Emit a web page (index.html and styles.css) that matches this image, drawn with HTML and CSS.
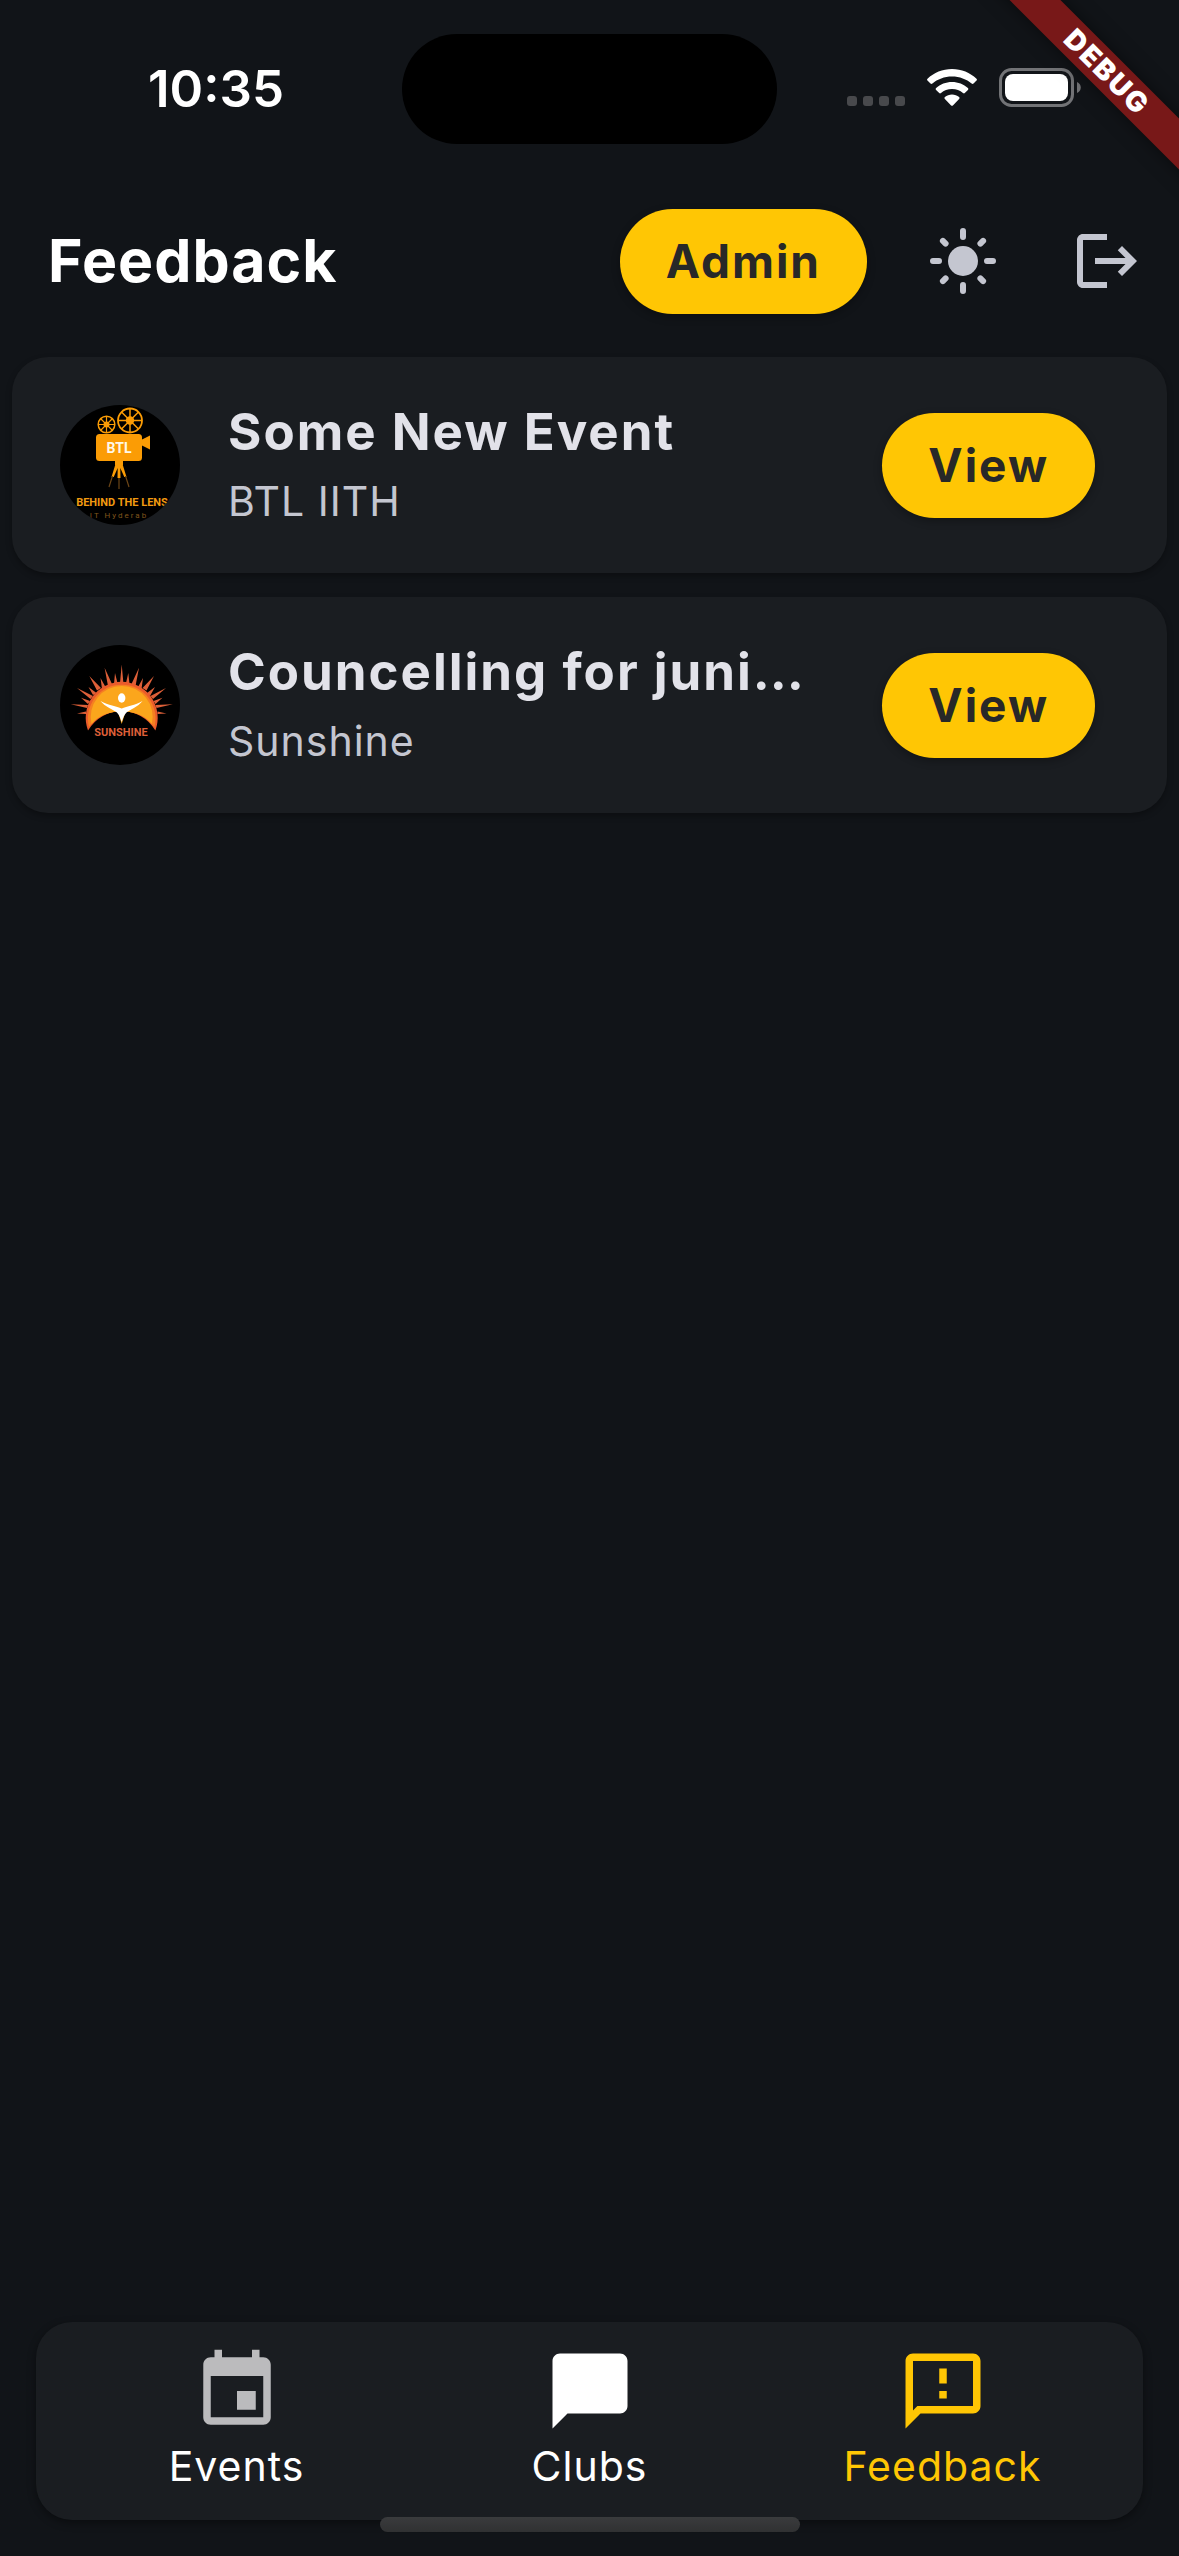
FILE: index.html
```html
<!DOCTYPE html>
<html lang="en">
<head>
<meta charset="utf-8">
<meta name="viewport" content="width=device-width, initial-scale=1">
<title>Feedback</title>
<link rel="stylesheet" href="styles.css">
</head>
<body>
<div class="app">
  <div class="status-bar">
    <time class="clock">10:35</time>
    <div class="island"></div>
    <div class="indicators">
      <svg class="signal" width="58" height="11" viewBox="0 0 58 11" aria-hidden="true">
        <rect width="10" height="10" rx="3"/><rect x="16" width="10" height="10" rx="3"/><rect x="32" width="10" height="10" rx="3"/><rect x="48" width="10" height="10" rx="3"/>
      </svg>
      <svg class="wifi" width="50" height="38" viewBox="0 0 50 38" aria-hidden="true">
        <path d="M25 0C15.500 0 6.900 3.700.5 9.700c-.6.600-.6 1.300 0 1.900l3 3c.6.600 1.300.6 1.900 0C10.500 10.300 17.400 7.600 25 7.600s14.500 2.700 19.600 7c.6.600 1.300.6 1.900 0l3-3c.6-.6.6-1.300 0-1.900C43.100 3.700 34.500 0 25 0z"/>
        <path d="M25 13c-6.100 0-11.700 2.300-15.900 6-.6.600-.6 1.300 0 1.900l3.100 3.100c.5.500 1.200.5 1.800 0 2.900-2.500 6.800-4 11-4s8.100 1.500 11 4c.6.500 1.300.5 1.800 0l3.100-3.100c.6-.6.6-1.300 0-1.900-4.200-3.700-9.800-6-15.900-6z"/>
        <path d="M25 25.500c-2.700 0-5.200 1-7.100 2.600-.6.500-.6 1.300 0 1.900l6.200 6.400c.5.600 1.300.6 1.800 0l6.200-6.400c.6-.6.6-1.400 0-1.900-1.900-1.600-4.400-2.600-7.100-2.600z"/>
      </svg>
      <svg class="battery" width="82" height="39" viewBox="0 0 82 39" aria-hidden="true">
        <rect x="1.500" y="1.500" width="72" height="36" rx="11" fill="none" stroke="#727376" stroke-width="3"/>
        <rect x="6" y="6" width="63" height="27" rx="8" fill="#fff"/>
        <path d="M78 14c5 2 5 9 0 11z" fill="#727376"/>
      </svg>
    </div>
  </div>

  <header class="app-bar">
    <h1 class="app-title">Feedback</h1>
    <button class="pill" type="button">Admin</button>
    <div class="tools">
      <button class="icon-button" type="button" aria-label="Light mode">
        <svg width="72" height="72" viewBox="0 0 24 24" aria-hidden="true">
          <circle cx="12" cy="12" r="5" fill="currentColor"/>
          <path d="M12 2v2M12 20v2M2 12h2M20 12h2M5.300 5.300l.9.900M17.800 17.800l.9.900M5.300 18.700l.9-.9M17.800 6.200l.9-.9" fill="none" stroke="currentColor" stroke-width="2" stroke-linecap="round"/>
        </svg>
      </button>
      <button class="icon-button" type="button" aria-label="Log out">
        <svg width="72" height="72" viewBox="0 0 24 24" fill="currentColor" aria-hidden="true">
          <path d="M17 7l-1.410 1.410L18.170 11H8v2h10.170l-2.580 2.580L17 17l5-5zM4 5h8V3H4c-1.100 0-2 .9-2 2v14c0 1.100.9 2 2 2h8v-2H4V5z"/>
        </svg>
      </button>
    </div>
  </header>

  <main class="event-list">
    <article class="card">
      <svg class="avatar" viewBox="0 0 120 120" role="img" aria-label="Behind The Lens club logo">
        <rect width="120" height="120" fill="#000"/>
        <g fill="none" stroke="#fb9c05">
          <circle cx="46.500" cy="19.500" r="8.300" stroke-width="1.500"/>
          <path d="M46.500 11v17M38 19.500h17M40.500 13.500l12 12M52.500 13.500l-12 12" stroke-width="1.200"/>
          <circle cx="70" cy="15.500" r="12" stroke-width="1.800"/>
          <path d="M70 3.500v24M58 15.500h24M61.500 7l17 17M78.500 7l-17 17" stroke-width="1.500"/>
        </g>
        <g fill="#fb9c05">
          <circle cx="46.500" cy="19.500" r="3"/>
          <circle cx="70" cy="15.500" r="4.200"/>
          <rect x="36" y="29" width="46" height="27" rx="3.500"/>
          <path d="M81 35l9-4.500v14L81 40zM55 56h8v4h-8z"/>
          <path d="M55.500 59h7l4 13h-2.200l-4-9 .2 10h-3l.2-10-4 9h-2.200z"/>
        </g>
        <path d="M52.500 71l-3.500 11M59 73v11M65.500 71l3.500 11" fill="none" stroke="#6b4516" stroke-width="1.200"/>
        <text class="logo-text logo-mark" x="59" y="48" text-anchor="middle">BTL</text>
        <text class="logo-text logo-name" x="62" y="101" text-anchor="middle">BEHIND THE LENS</text>
        <text class="logo-place" x="59" y="113" text-anchor="middle">IT Hyderab</text>
      </svg>
      <div class="card-text">
        <h2 class="card-title">Some New Event</h2>
        <p class="card-club">BTL IITH</p>
      </div>
      <button class="pill" type="button">View</button>
    </article>

    <article class="card">
      <svg class="avatar" viewBox="0 0 120 120" role="img" aria-label="Sunshine club logo">
        <rect width="120" height="120" fill="#000"/>
        <g fill="#dd5f38">
          <path d="M60 38l1.700-18.500L63.400 38zM48 41l-3.400-18.300L52 39zM75.500 41l3.500-18.300L71.500 39zM37 45.500L29.300 31 41 43zM86.500 45.500L94 31 82.500 43zM30.500 54L17 43l16 8zM93 54l13-11-15.500 8zM27 63l-16.300-3.700L28 60zM96.500 63l16.300-3.700L95.500 60z"/>
          <path d="M54 39l1-11 2.500 10zM66 38l2.300-10L69.500 39zM42 44l-1.500-11 5 9zM78 42l5-9-1.500 11zM33 50l-4.500-8 8 6zM87 48l8-6-5 9zM28 59l-7-6.300 9 3.300zM93.500 56l9-3.300-7 6.300zM26 69l-9-.5 9-2zM97.500 69l9-.5-9-2z"/>
        </g>
        <path d="M28 85.500a36 36 0 1 1 67.400 0Q84 67 61.700 66 39.400 67 28 85.500z" fill="#ea5b2b"/>
        <path d="M29 82a33.800 33.800 0 1 1 65.400 0Q84 67 61.700 66 39.400 67 29 82z" fill="#f58021"/>
        <path d="M31.500 79a31 31 0 1 1 60.400 0Q82 67 61.700 66 41.400 67 31.500 79z" fill="#fba61c"/>
        <path d="M58 67l3.700 12 3.700-12z" fill="#fba61c"/>
        <ellipse cx="61.700" cy="53" rx="3.700" ry="4.700" fill="#fff"/>
        <path d="M40.500 56c8 4.500 16 5 21.200 7.500C67 61 75 60.500 82.500 56c-4.500 6-13 9-16 11.500-2.500 2.200-3.500 6-4.800 9.500-1.300-3.500-2.300-7.300-4.800-9.500-3-2.500-11.900-5.500-16.400-11.500z" fill="#fff"/>
        <text class="logo-text logo-sun" x="61" y="91" text-anchor="middle">SUNSHINE</text>
      </svg>
      <div class="card-text">
        <h2 class="card-title">Councelling for juni…</h2>
        <p class="card-club">Sunshine</p>
      </div>
      <button class="pill" type="button">View</button>
    </article>
  </main>

  <nav class="tab-bar" aria-label="Main">
    <a class="tab" href="#events">
      <svg class="tab-icon muted" viewBox="0 0 24 24" aria-hidden="true"><path d="M17 12h-5v5h5v-5zM16 1v2H8V1H6v2H5c-1.110 0-1.990.9-1.990 2L3 19c0 1.100.89 2 2 2h14c1.100 0 2-.9 2-2V5c0-1.100-.9-2-2-2h-1V1h-2zm3 18H5V8h14v11z"/></svg>
      <span>Events</span>
    </a>
    <a class="tab" href="#clubs">
      <svg class="tab-icon" viewBox="0 0 24 24" aria-hidden="true"><path d="M20 2H4c-1.100 0-2 .9-2 2v18l4-4h14c1.100 0 2-.9 2-2V4c0-1.100-.9-2-2-2z"/></svg>
      <span>Clubs</span>
    </a>
    <a class="tab active" href="#feedback" aria-current="page">
      <svg class="tab-icon" viewBox="0 0 24 24" aria-hidden="true"><path d="M20 2H4c-1.100 0-1.990.9-1.990 2L2 22l4-4h14c1.100 0 2-.9 2-2V4c0-1.100-.9-2-2-2zm0 14H5.170l-.59.590-.58.580V4h16v12zm-9-4h2v2h-2zm0-6h2v4h-2z"/></svg>
      <span>Feedback</span>
    </a>
  </nav>

  <div class="home-indicator"></div>
  <div class="ribbon-corner"><div class="ribbon">DEBUG</div></div>
</div>
</body>
</html>
```
FILE: styles.css
```css
* {
  box-sizing: border-box;
}

body {
  margin: 0;
  background: #111418;
  color: #fff;
  font-family: Inter, "Liberation Sans", sans-serif;
}

h1,
h2,
p {
  margin: 0;
}

button {
  border: 0;
  padding: 0;
  background: none;
  font-family: inherit;
}

svg {
  display: block;
}

.app {
  position: relative;
  display: flex;
  flex-direction: column;
  min-height: 100vh;
  padding-bottom: 36px;
}

/* Status bar */
.status-bar {
  display: grid;
  grid-template-columns: 1fr 375px 1fr;
  align-items: center;
  height: 177px;
}

.clock {
  padding-left: 148px;
  font-size: 51px;
  font-weight: 600;
  line-height: 60px;
}

.island {
  height: 110px;
  border-radius: 55px;
  background: #000;
}

.indicators {
  display: flex;
  justify-content: flex-end;
  align-items: flex-end;
  gap: 22px;
  padding: 0 98px 2px 0;
}

.signal {
  fill: #48494c;
}

.wifi {
  fill: #fff;
}

/* App bar */
.app-bar {
  display: flex;
  align-items: center;
  height: 168px;
  padding-left: 48px;
}

.app-title {
  flex: 1;
  font-size: 59px;
  font-weight: 700;
  line-height: 72px;
  letter-spacing: 1px;
}

.tools {
  display: flex;
  margin-left: 24px;
}

.icon-button {
  display: grid;
  place-items: center;
  width: 144px;
  height: 144px;
  color: #c4c6d0;
}

.pill {
  flex: none;
  height: 105px;
  padding: 0 46px;
  border-radius: 53px;
  background: #ffc604;
  box-shadow: 0 3px 9px rgba(0, 0, 0, 0.3);
  color: #282828;
  font-size: 46px;
  font-weight: 700;
  letter-spacing: 2px;
}

/* Event cards */
.event-list {
  display: flex;
  flex: 1;
  flex-direction: column;
  gap: 24px;
  padding: 12px;
}

.card {
  display: flex;
  align-items: center;
  gap: 48px;
  padding: 42px 72px 42px 48px;
  border-radius: 36px;
  background: #1a1d21;
  box-shadow: 0 3px 6px rgba(0, 0, 0, 0.3);
}

.avatar {
  flex: none;
  width: 120px;
  height: 120px;
  border-radius: 50%;
}

.card-text {
  display: flex;
  flex: 1;
  flex-direction: column;
  gap: 6px;
  min-width: 0;
}

.card-title {
  overflow: hidden;
  color: #e2e2e9;
  font-size: 51px;
  font-weight: 700;
  line-height: 66px;
  letter-spacing: 2px;
  text-overflow: ellipsis;
  white-space: nowrap;
}

.card-club {
  color: #c4c6d0;
  font-size: 41px;
  font-weight: 400;
  line-height: 60px;
  letter-spacing: 1px;
}

/* Club logos */
.logo-text {
  font-family: Roboto, "Liberation Sans", sans-serif;
  font-weight: 700;
}

.logo-mark {
  fill: #fff8e8;
  font-size: 14px;
}

.logo-name {
  fill: #f29a10;
  font-size: 11px;
}

.logo-place {
  fill: #80561c;
  font-family: Roboto, "Liberation Sans", sans-serif;
  font-size: 8px;
  letter-spacing: 2px;
}

.logo-sun {
  fill: #dd5f38;
  font-size: 11px;
}

/* Bottom navigation */
.tab-bar {
  display: grid;
  grid-template-columns: repeat(3, 1fr);
  margin: 0 36px;
  padding: 24px;
  border-radius: 36px;
  background: #1a1d21;
  box-shadow: 0 3px 9px rgba(0, 0, 0, 0.4);
}

.tab {
  display: flex;
  flex-direction: column;
  align-items: center;
  color: #fff;
  font-size: 41px;
  font-weight: 400;
  line-height: 60px;
  letter-spacing: 1px;
  text-decoration: none;
}

.tab.active {
  color: #ffc604;
}

.tab-icon {
  width: 90px;
  height: 90px;
  fill: currentColor;
}

.tab-icon.muted {
  fill: #bbbbbd;
}

/* System overlays */
.home-indicator {
  position: absolute;
  bottom: 24px;
  left: 50%;
  width: 420px;
  height: 15px;
  margin-left: -210px;
  border-radius: 8px;
  background: linear-gradient(#3a3b3d, #303132);
}

.ribbon-corner {
  position: absolute;
  top: 0;
  right: 0;
  width: 240px;
  height: 240px;
  overflow: hidden;
  pointer-events: none;
}

.ribbon {
  position: absolute;
  top: 54px;
  left: -2px;
  width: 340px;
  background: #781818;
  box-shadow: 0 0 18px rgba(0, 0, 0, 0.5);
  font-size: 28px;
  font-weight: 900;
  line-height: 36px;
  letter-spacing: 2px;
  text-align: center;
  transform: rotate(45deg);
}
```
